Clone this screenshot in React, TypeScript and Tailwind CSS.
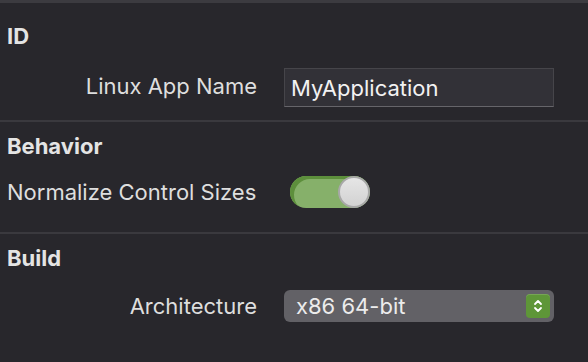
const font = { fontFamily: "Inter, 'Noto Sans', sans-serif" };

const Header = ({ title, top }: { title: string; top: string }) => (
  <h2 className={`${top} pl-[7px] text-[22px] font-bold text-[#e4e4e4] leading-none`}>{title}</h2>
);

const Stepper = () => (
  <div className="w-[24px] h-[24px] rounded-[4px] bg-[#5e9638] flex items-center justify-center shadow-[inset_0_1px_0_rgba(255,255,255,0.15)]">
    <svg width="10" height="16" viewBox="0 0 10 16" fill="none" stroke="#ffffff" strokeWidth="1.8" strokeLinecap="round" strokeLinejoin="round">
      <path d="M2 6 L5 3 L8 6" />
      <path d="M2 10 L5 13 L8 10" />
    </svg>
  </div>
);

const App = () => {
  return (
    <div className="w-[588px] h-[362px] bg-[#28272c] text-[#dedede] text-[22px] leading-none overflow-hidden border-t-[3px] border-[#3c3b40]" style={font}>
      {/* ID */}
      <section className="h-[119px] border-b-2 border-[#3a393e]">
        <Header title="ID" top="pt-[22px]" />
        <div className="flex items-center mt-[21px]">
          <div className="w-[257px] text-right pb-[3px]">Linux App Name</div>
          <div className="ml-[27px] w-[270px] h-[39px] bg-[#323137] border border-[#46454a] border-b-[#66656a] flex items-center pl-[6px] text-[#f2f2f2]">
            MyApplication
          </div>
        </div>
      </section>

      {/* Behavior */}
      <section className="h-[112px] border-b-2 border-[#3a393e]">
        <Header title="Behavior" top="pt-[13px]" />
        <div className="flex items-center mt-[19px]">
          <div className="w-[283px] pl-[7px]">Normalize Control Sizes</div>
          <div className="ml-[7px] relative w-[80px] h-[32px] rounded-full bg-[#86b06a] shadow-[inset_4px_3px_0_#5d8f3c]">
            <div className="absolute right-0 top-0 w-[32px] h-[32px] rounded-full bg-gradient-to-b from-[#e6e6e6] to-[#d2d2d2] border-2 border-[#a8a8a8]" />
          </div>
        </div>
      </section>

      {/* Build */}
      <section>
        <Header title="Build" top="pt-[13px]" />
        <div className="flex items-center mt-[21px]">
          <div className="w-[257px] text-right">Architecture</div>
          <div className="ml-[27px] w-[270px] h-[32px] rounded-[6px] bg-[#626166] flex items-center justify-between pl-[12px] pr-[4px] text-[#ececec]">
            <span>x86 64-bit</span>
            <Stepper />
          </div>
        </div>
      </section>
    </div>
  );
};

export default App;
